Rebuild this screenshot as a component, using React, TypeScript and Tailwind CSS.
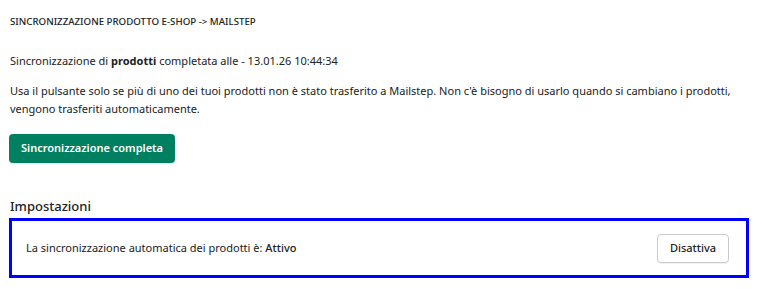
import React from "react";

export default function App() {
  return (
    <div className="w-[758px] h-[289px] bg-white text-[#202223] font-['Noto_Sans',sans-serif] pl-[10px] pt-[15px]">
      <div className="text-[9.7px] font-medium leading-[14px]">
        SINCRONIZZAZIONE PRODOTTO E-SHOP -&gt; MAILSTEP
      </div>
      <div className="mt-[23px] text-[11px] leading-[18px]">
        Sincronizzazione di <span className="font-bold">prodotti</span> completata alle - 13.01.26 10:44:34
      </div>
      <div className="mt-[12px] text-[11px] leading-[18px]">
        <div className="whitespace-nowrap">
          Usa il pulsante solo se più di uno dei tuoi prodotti non è stato trasferito a Mailstep. Non c'è bisogno di usarlo quando si cambiano i prodotti,
        </div>
        <div className="whitespace-nowrap">vengono trasferiti automaticamente.</div>
      </div>
      <button className="mt-[16px] h-[29px] w-[166px] -ml-px rounded-[4px] bg-[#008060] text-white text-[11px] font-semibold shadow-[0_1px_0_rgba(0,0,0,0.08)]">
        Sincronizzazione completa
      </button>
      <div className="mt-[34px] text-[13px] font-medium leading-[18px]">Impostazioni</div>
      <div className="mt-[3px] -ml-px w-[740px] h-[60px] border-[3px] border-[#0000ff] flex items-center justify-between pl-[14px] pr-[17px]">
        <div className="text-[11px]">
          La sincronizzazione automatica dei prodotti è: <span className="font-medium">Attivo</span>
        </div>
        <button className="h-[29px] w-[72px] rounded-[4px] border border-[#c9cccf] bg-white text-[11px] font-medium text-[#202223] shadow-[0_1px_0_rgba(0,0,0,0.05)]">
          Disattiva
        </button>
      </div>
    </div>
  );
}
